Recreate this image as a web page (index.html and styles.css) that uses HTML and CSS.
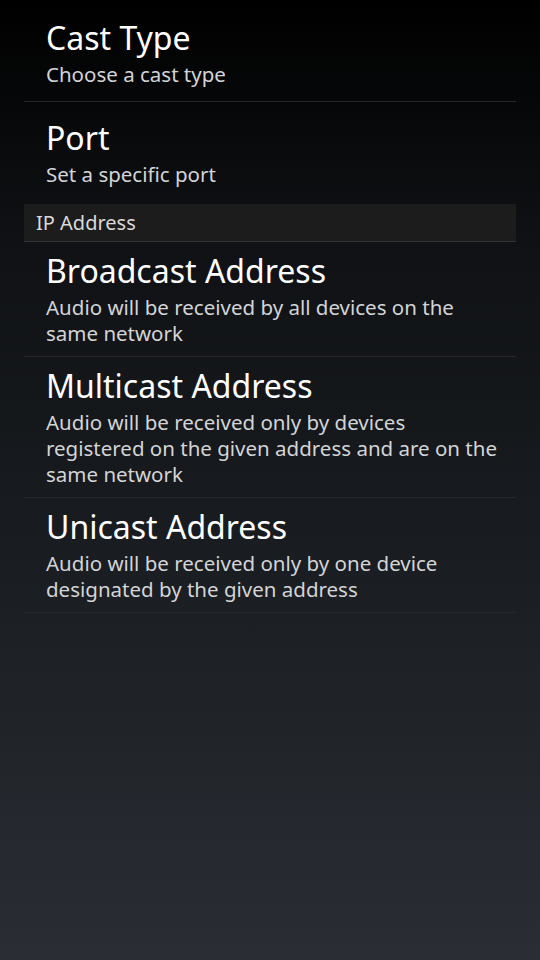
FILE: index.html
```html
<!DOCTYPE html>
<html>
<head>
<meta charset="utf-8">
<link rel="stylesheet" href="styles.css">
</head>
<body>
<div class="screen">
  <div class="list">
    <div class="item first">
      <div class="title">Cast Type</div>
      <div class="sub">Choose a cast type</div>
    </div>
    <div class="item last">
      <div class="title">Port</div>
      <div class="sub">Set a specific port</div>
    </div>
    <div class="header">IP Address</div>
    <div class="item tall">
      <div class="title">Broadcast Address</div>
      <div class="sub">Audio will be received by all devices on the same network</div>
    </div>
    <div class="item tall">
      <div class="title">Multicast Address</div>
      <div class="sub">Audio will be received only by devices registered on the given address and are on the same network</div>
    </div>
    <div class="item tall">
      <div class="title">Unicast Address</div>
      <div class="sub">Audio will be received only by one device designated by the given address</div>
    </div>
  </div>
</div>
</body>
</html>
```
FILE: styles.css
```css
html, body {
  margin: 0;
  padding: 0;
}
body {
  width: 540px;
  height: 960px;
  overflow: hidden;
  font-family: "Noto Sans", "Open Sans", sans-serif;
}
.screen {
  height: 960px;
  background: linear-gradient(180deg, #000000 0%, #0f1114 25%, #1b1e22 62%, #2a2d33 100%);
  padding: 0 24px;
  box-sizing: border-box;
}
.list {
  display: flex;
  flex-direction: column;
}
.item {
  box-sizing: border-box;
  min-height: 102px;
  padding: 11px 15px 10px 22px;
  display: flex;
  flex-direction: column;
  justify-content: center;
  border-bottom: 1px solid #25272a;
}
.item.first {
  padding-top: 15px;
}
.item.last {
  border-bottom: none;
}
.title {
  color: #ffffff;
  font-size: 32px;
  line-height: 36px;
  white-space: nowrap;
}
.sub {
  color: #d3d4d6;
  font-size: 20.5px;
  line-height: 26px;
  margin-top: 5px;
}
.header {
  height: 38px;
  box-sizing: border-box;
  background: #1c1c1d;
  border-bottom: 1px solid #303234;
  color: #d9d9d9;
  font-size: 20px;
  line-height: 37px;
  padding-left: 12px;
}
```
